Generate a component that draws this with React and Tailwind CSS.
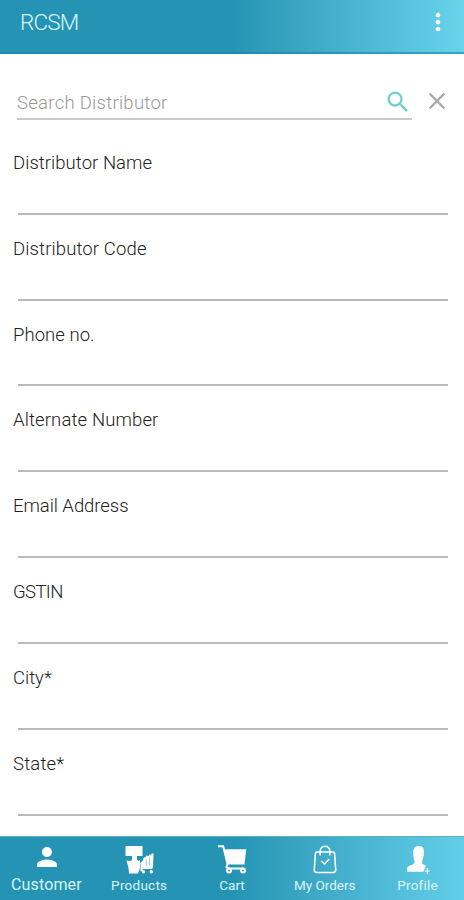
import { MdPerson, MdSearch, MdClose, MdMoreVert } from 'react-icons/md'

const fields = [
  { label: 'Distributor Name', spacing: 'tracking-[0.05px]' },
  { label: 'Distributor Code', spacing: 'tracking-[0.13px]' },
  { label: 'Phone no.', spacing: 'tracking-[0.05px]' },
  { label: 'Alternate Number', spacing: 'tracking-[0.13px]' },
  { label: 'Email Address', spacing: 'tracking-[-0.05px]' },
  { label: 'GSTIN', spacing: 'tracking-[-0.6px]' },
  { label: 'City*', spacing: 'tracking-[0px]' },
  { label: 'State*', spacing: 'tracking-[0.2px]' },
]

const ProductsIcon = () => (
  <svg viewBox="0 0 30 30" className="w-[30px] h-[30px]" fill="currentColor">
    <path d="M1.500 2h17v10h-5.500v4l1.500 1 1.500-1v8l-2 5.500H5l-.5-5.500-2-7.500L6.500 17l1.500-1v-4H1.500z" />
    <path d="M16.500 18.500l2.500-2 .8-3 2-.5.8-1.500 1.900.5.8-1.500 1.900.3.6-1.300 1.700-.2-.5 14.200-1 1.500h-9l-1 2.500-1.500-.5z" />
    <path d="M22.300 15.500v6M25.600 13.500v8" stroke="#2594b4" strokeWidth=".5" />
    <circle cx="19.500" cy="27.700" r="1.700" />
    <circle cx="27.300" cy="27.700" r="1.700" />
  </svg>
)

const CartIcon = () => (
  <svg viewBox="0 0 30 30" className="w-[30px] h-[30px]" fill="none" stroke="currentColor" strokeWidth="2">
    <path d="M1 2.200h5.200L10.500 20l-1 3 2.500 1.500h14.500" />
    <path d="M6.500 5.200h22.700L27.500 20.500H10z" fill="currentColor" stroke="none" />
    <circle cx="12" cy="26.500" r="2" strokeWidth="2" />
    <circle cx="26" cy="26.500" r="2" strokeWidth="2" />
  </svg>
)

const OrdersIcon = () => (
  <svg viewBox="0 0 26 30" className="w-[26px] h-[30px]" fill="none" stroke="currentColor" strokeWidth="1.600" strokeLinecap="round" strokeLinejoin="round">
    <path d="M5 8h16q1.500 0 1.600 1.500l1.100 16q.2 3-2.500 3H4.800q-2.700 0-2.500-3L3.400 9.500Q3.500 8 5 8z" />
    <path d="M8.200 11V7a4.800 4.800 0 0 1 9.600 0v4" />
    <path d="M9.800 17.500l2.600 2.500 4.400-4.500" />
  </svg>
)

const ProfileIcon = () => (
  <svg viewBox="0 0 30 30" className="w-[30px] h-[30px]" fill="currentColor">
    <path d="M15.700 2c3.500 0 5.300 2 5.200 5.800 0 4-.7 7-1.700 9v3l3.700 2-2.600 6H4.200v-4.300c1-2 6.300-2.800 7.300-4.500v-2c-1-2-1.300-5-1.300-8.500C10.200 4.500 12 2 15.700 2z" />
    <path d="M24.300 24v6M21.800 27h5" stroke="currentColor" strokeWidth="1.100" />
  </svg>
)

const tabs = [
  { label: 'Customer', icon: <MdPerson className="w-[30px] h-[30px] -mt-0.5 ml-px" />, text: 'text-[16px] tracking-[0.15px]' },
  { label: 'Products', icon: <ProductsIcon />, text: 'text-[13.5px] tracking-[0.25px]' },
  { label: 'Cart', icon: <CartIcon />, text: 'text-[13.5px]' },
  { label: 'My Orders', icon: <OrdersIcon />, text: 'text-[13.5px]' },
  { label: 'Profile', icon: <ProfileIcon />, text: 'text-[13.5px] tracking-[0.25px]' },
]

export default function App() {
  return (
    <div className="flex flex-col w-full h-[900px] overflow-hidden bg-white font-[Roboto,sans-serif]">
      <header className="flex items-center justify-between shrink-0 h-[54px] pl-5 pr-3 pb-[9px] text-[#d9f5fa] bg-linear-to-r from-[#2594b4] from-50% to-[#68d3eb] border-b-2 border-[#128aab]/60">
        <h1 className="pt-px text-[22.5px] leading-none font-light tracking-[-0.8px]">RCSM</h1>
        <MdMoreVert className="w-[28px] h-[28px] text-white" />
      </header>

      <main className="flex flex-col flex-1 min-h-0 overflow-hidden">
        {/* Search */}
        <div className="flex items-center shrink-0 h-[66px] pt-8 pl-[17px] pr-3">
          <div className="flex items-center justify-between w-[395px] shrink-0 h-[34px] border-b-2 border-[#c9c9c9]">
            <span className="pt-0.5 text-[18.5px] leading-none font-light tracking-[0.28px] text-[#999]">Search Distributor</span>
            <MdSearch className="w-[28px] h-[28px] text-[#6fcfcf]" />
          </div>
          <MdClose className="w-[28px] h-[28px] ml-[11px] -mt-1 shrink-0 text-[#aaa]" />
        </div>

        {/* Distributor form */}
        <form className="pt-[9px]">
          {fields.map(f => (
            <label key={f.label} className="flex flex-col justify-between h-[85.84px] pt-6">
              <span className={`pl-[13px] text-[18.5px] leading-[21px] font-light text-[#222] ${f.spacing}`}>{f.label}</span>
              <span className="ml-[18px] mr-4 border-b-2 border-[#bababa]" />
            </label>
          ))}
        </form>
      </main>

      <nav className="grid grid-cols-5 shrink-0 h-[64px] text-white bg-linear-to-r from-[#2594b4] from-50% to-[#62cfe8] border-t border-[#5eafc6]">
        {tabs.map(t => (
          <a key={t.label} className="flex flex-col items-center pt-[7px]">
            <span className="h-[32px]">{t.icon}</span>
            <span className={`leading-[18px] whitespace-nowrap text-[#d9f5fa] ${t.text}`}>{t.label}</span>
          </a>
        ))}
      </nav>
    </div>
  )
}
